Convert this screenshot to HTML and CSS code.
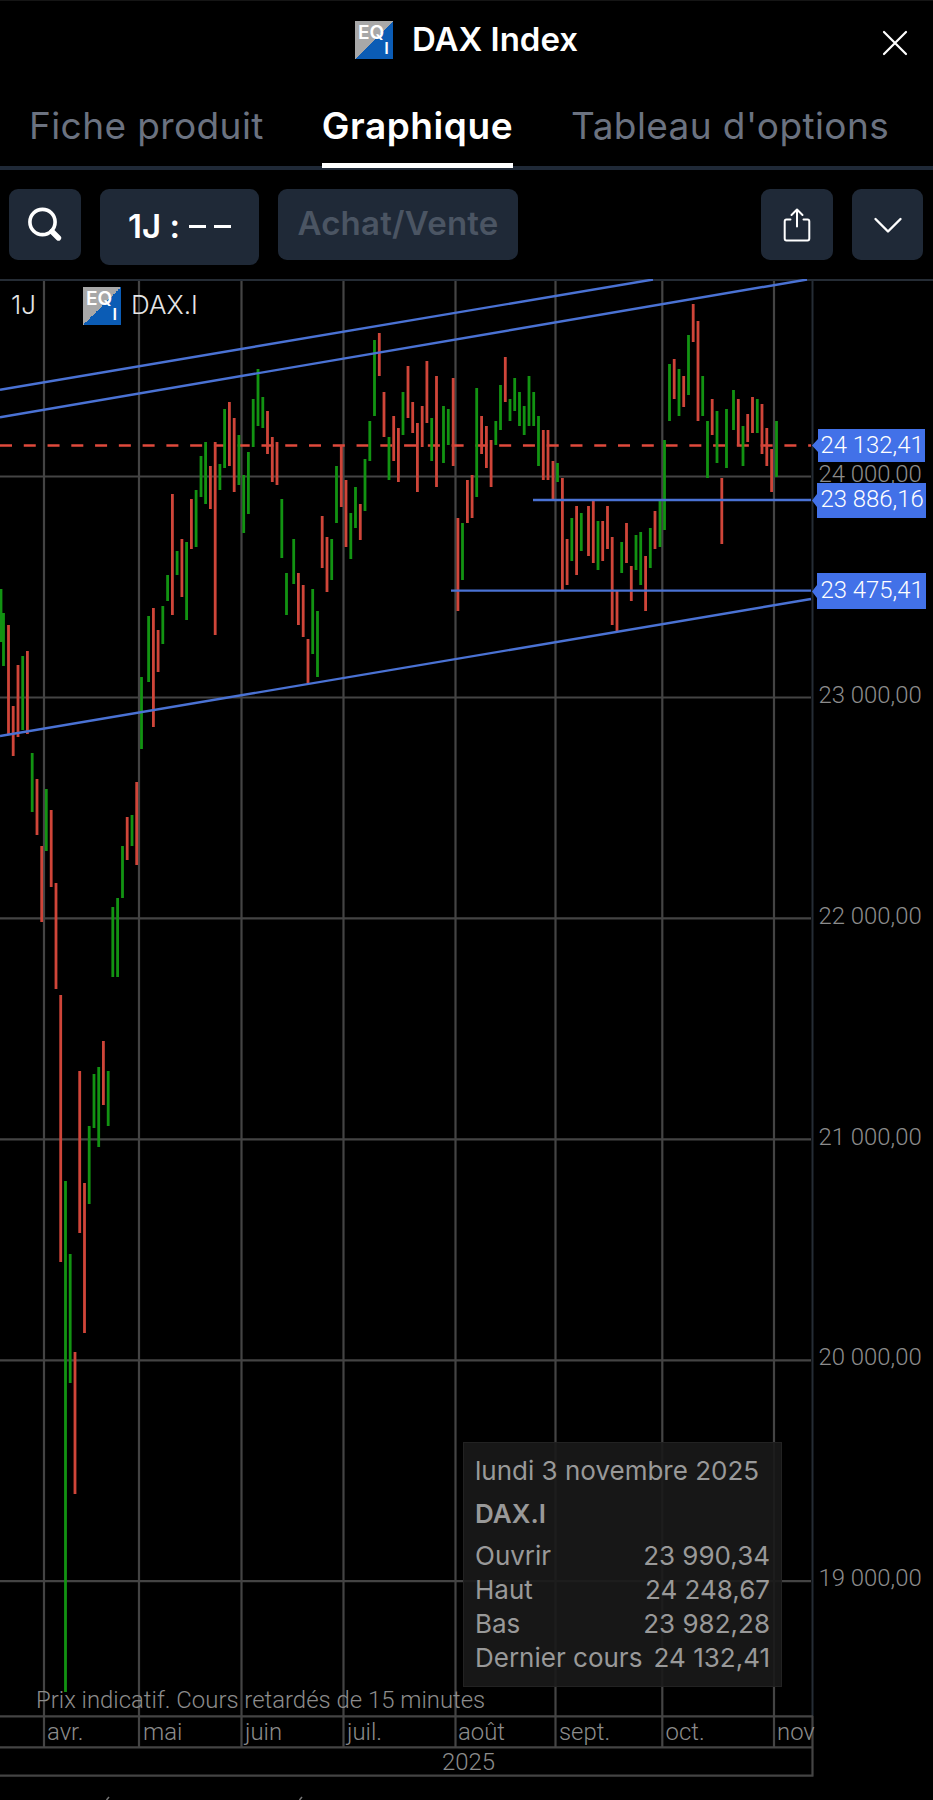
FILE: index.html
```
<!DOCTYPE html>
<html lang="fr">

<head>
    <meta charset="UTF-8" />
    <title>DAX Index</title>
    <link rel="stylesheet" href="styles.css">
</head>

<body>
    <header class="header">
        <div class="logo"><span class="eq">EQ</span><span class="i">I</span></div>
        <h1 class="title">DAX Index</h1>
        <svg class="close" width="26" height="26" viewBox="0 0 26 26">
            <path d="M2 2L24 24M24 2L2 24" />
        </svg>
    </header>

    <nav class="tabs">
        <a class="tab">Fiche produit</a>
        <a class="tab active">Graphique</a>
        <a class="tab">Tableau d'options</a>
    </nav>

    <div class="toolbar">
        <button class="btn icon">
            <svg width="36" height="36" viewBox="0 0 36 36">
                <circle cx="15.5" cy="15" r="12.6" fill="none" stroke="#fff" stroke-width="3.6" />
                <path d="M25 24.5L31.5 31" stroke="#fff" stroke-width="5.4" stroke-linecap="round" />
            </svg>
        </button>
        <button class="btn period"><span>1J</span><span class="colon">:</span><i></i><i></i></button>
        <button class="btn trade" disabled>Achat/Vente</button>
        <span class="spacer"></span>
        <button class="btn icon">
            <svg class="thin" width="28" height="36" viewBox="0 0 28 36">
                <path d="M7.500 12.500H3.500Q1.700 12.500 1.700 14.500V31.500Q1.700 33.500 3.500 33.500H24.500Q26.300 33.500 26.300 31.500V14.500Q26.300 12.500 24.500 12.500H20.500" />
                <path d="M14 19.500V3M8.500 8L14 2.500L19.500 8" />
            </svg>
        </button>
        <button class="btn icon last">
            <svg class="thin" width="30" height="18" viewBox="0 0 30 18">
                <path d="M2.500 3L15 15.500L27.500 3" stroke-width="2.4" />
            </svg>
        </button>
    </div>

    <main class="chart">
        <svg class="plot" width="933" height="1521" viewBox="0 279 933 1521">
            <!-- grid -->
            <path class="grid" d="M44 280V1747M139 280V1747M241.500 280V1747M343.500 280V1747M455.500 280V1747M555.500 280V1747M662.300 280V1747M774 280V1747" />
            <path class="grid" d="M0 476.500H811M0 697.500H811M0 918.300H811M0 1139.300H811M0 1360.300H811M0 1581.200H811" />
            <path class="frame" d="M0 280H933M812.500 280V1716" />
            <path class="grid" d="M0 1716.400H813M0 1747.400H813M0 1775.600H813.500M812.500 1716V1776" />

            <!-- last price -->
            <path class="last-price" d="M0 445.500H811" />

            <!-- daily ranges, up -->
            <path class="up" d="M1 589V642M3.500 613V666M22.700 656V730M32.200 753V812M46.300 789V851M65.500 1181V1692M70.200 1254V1383M89.200 1126V1204M94 1074V1128M98.700 1067V1147M108.200 1071V1126M112.800 907V977M117.600 898V977M122.500 846V898M132 815V846
                M141.500 677V749M148.600 616V682M162.800 606V644M167.600 575V601M177.100 551V575M186.600 542V620M196.100 490V547M201 456V497M205.600 442V504M219.900 464V490M224.600 409V468M238.900 435V485M243.700 475V533M248.400 452V514M253.200 399V447M258 369V426
                M262.800 397V428M281.800 499V558M286.500 573V615M293.700 539V584M312.700 589V654M317.500 611V677M331.700 539V580M336.500 466V523M350.800 513V559M355.500 487V528M365 459V511M369.800 421V461M374.500 340V416M389 437V480M403 392V435M431.700 418V461M443.500 406V463M448.300 409V445M462.500 523V580M476.700 388V497M495.800 421V445M500.500 385V430
                M510 399V421M514.700 378V411M519.500 392V426M524.200 406V435M529 376V426M533.700 392V426M538.500 416V466M557.500 463V482M571.800 518V561M581.300 513V551M598 521V570M621.700 542V573M636 535V570M640.700 532V585M650.300 528V568M660 500V547M664.500 440V530
                M669.500 364V421M679 369V416M688.500 335V395M702.700 376V416M707.500 421V478M717 411V463M726.500 409V468M733.500 390V430M743 426V466M757.300 399V433M776.500 421V477" />

            <!-- daily ranges, down -->
            <path class="down" d="M8.500 625V734M13.200 706V756M18 665V737M27.400 651V734M37 779V835M41.700 846V922M51.200 810V887M56 883V989M60.700 995V1262M75 1352V1494M79.700 1071V1233M84.500 1183V1333M103.400 1041V1105M127.200 817V860M136.700 782V865
                M153.400 608V727M158.100 630V672M172.400 494V615M181.900 539V597M191.400 499V549M210.400 466V509M215.200 442V635M229.400 402V466M234.200 418V492M267.500 411V454M272.300 437V482M277 442V485M298.400 573V625M303.200 585V637M308 639V683M322.200 516V568M327 537V592M341.300 445V507M346 480V547M360.300 504V540
                M379.300 333V376M384 392V437M393.700 416V461M398.400 428V482M408 366V418M412.700 402V433M417.400 423V492M422.200 406V447M426.900 361V423M436.500 376V487M453.200 378V466M457.900 518V611M467.400 480V523M472.100 475V518M481.600 416V454M486.400 426V468M491.100 440V487M505.300 357V402
                M543.300 430V480M548 430V480M553 461V501M562.400 478V590M567.100 539V585M576.600 506V575M588.500 506V556M593.300 501V563M602.700 521V561M607.500 506V549M612.200 537V625M617 591V632M626.500 523V563M631.300 566V601M645.600 556V611M655 511V549
                M674.200 359V399M683.700 376V407M693.200 304V342M698 321V421M712.200 399V435M721.800 478V544M738.300 399V446M747.700 414V442M752.500 397V433M762 404V454M766.800 428V466M771.600 449V492" />

            <!-- drawn trend lines -->
            <path class="trend" d="M0 389.700L653 279.500M0 417.200L807 279.500M0 736L811 599M533 500H811M451 590.600H811" />

            <!-- price scale -->
            <g class="scale">
                <text x="818.500" y="481.500">24 000,00</text>
                <text x="818.500" y="702.500">23 000,00</text>
                <text x="818.500" y="923.500">22 000,00</text>
                <text x="818.500" y="1144.500">21 000,00</text>
                <text x="818.500" y="1364.500">20 000,00</text>
                <text x="818.500" y="1585.500">19 000,00</text>
            </g>

            <g class="flags">
                <path d="M812 445.500L818 439V429H925V462H818V452Z" />
                <path d="M812 500.500L817 494V483H926V518H817V507Z" />
                <path d="M812 591.500L817 585V573H926V609H817V598Z" />
            </g>
            <g class="flag-text">
                <text x="820.500" y="452.500">24 132,41</text>
                <text x="820.500" y="507">23 886,16</text>
                <text x="820.500" y="597.500">23 475,41</text>
            </g>

            <!-- time scale -->
            <g class="scale">
                <text x="36" y="1708">Prix indicatif. Cours retardés de 15 minutes</text>
                <text x="47" y="1740">avr.</text>
                <text x="143" y="1740">mai</text>
                <text x="245" y="1740">juin</text>
                <text x="347" y="1740">juil.</text>
                <text x="458" y="1740">août</text>
                <text x="559" y="1740">sept.</text>
                <text x="665.500" y="1740">oct.</text>
                <text x="777" y="1740">nov</text>
                <text x="442" y="1770">2025</text>
            </g>

            <!-- top of the next line of text, below the fold -->
            <path class="accents" d="M106.500 1800L109 1797M299.500 1800L302 1797" />
        </svg>

        <div class="legend">
            <span>1J</span>
            <div class="logo"><span class="eq">EQ</span><span class="i">I</span></div>
            <span>DAX.I</span>
        </div>

        <div class="tooltip">
            <div class="date">lundi 3 novembre 2025</div>
            <div class="name">DAX.I</div>
            <div class="row"><span>Ouvrir</span><span>23 990,34</span></div>
            <div class="row"><span>Haut</span><span>24 248,67</span></div>
            <div class="row"><span>Bas</span><span>23 982,28</span></div>
            <div class="row"><span>Dernier cours</span><span>24 132,41</span></div>
        </div>
    </main>
</body>

</html>
```
FILE: styles.css
```
* {
    box-sizing: border-box;
}

body {
    margin: 0;
    width: 933px;
    height: 1800px;
    overflow: hidden;
    background-color: #000;
    color: #fff;
    font-family: Inter, "Liberation Sans", sans-serif;
}

svg {
    display: block;
}

.logo {
    position: relative;
    width: 38px;
    height: 38px;
    background: linear-gradient(135deg, #a8a8a8 50%, #0b5cb5 50%);
    color: #fff;
    font-weight: 600;
}

.logo .eq {
    position: absolute;
    left: 3px;
    top: 2px;
    font-size: 19px;
    line-height: 20px;
}

.logo .i {
    position: absolute;
    right: 4px;
    bottom: 1px;
    font-size: 16.5px;
    line-height: 20px;
}

.header {
    display: flex;
    align-items: center;
    justify-content: center;
    position: relative;
    height: 80px;
    border-top: 1px solid #151515;
}

.header .logo {
    top: -1px;
}

.title {
    margin: 0 0 4px 19px;
    font-size: 33px;
    font-weight: 600;
    line-height: 40px;
}

.close {
    position: absolute;
    right: 25px;
    top: 29px;
    fill: none;
    stroke: #fff;
    stroke-width: 2.2;
    stroke-linecap: round;
}

.tabs {
    display: flex;
    height: 90px;
    padding-left: 29px;
    gap: 58px;
    border-bottom: 4px solid #1f2937;
}

.tab {
    height: 88px;
    padding-top: 23px;
    font-size: 37px;
    line-height: 46px;
    letter-spacing: 0.4px;
    color: #6b7280;
    white-space: nowrap;
}

.tab.active {
    color: #fff;
    font-weight: 600;
    letter-spacing: 0.55px;
    border-bottom: 5px solid #fff;
}

.toolbar {
    display: flex;
    align-items: flex-start;
    gap: 19px;
    height: 109px;
    padding: 19px 10px 0 9px;
}

.btn {
    display: flex;
    align-items: center;
    justify-content: center;
    height: 71px;
    padding: 0;
    border: 0;
    border-radius: 9px;
    background-color: #1f2937;
    color: #fff;
    font: 600 33px Inter, sans-serif;
}

.btn.icon {
    width: 72px;
}

.btn.last {
    width: 71px;
}

.btn.period {
    width: 159px;
    height: 76px;
    gap: 8.5px;
}

.btn.period span {
    margin-bottom: 3px;
}

.btn.period i {
    width: 17px;
    height: 3px;
    margin-bottom: 2px;
    background-color: #fff;
}

.btn.trade {
    width: 240px;
    padding-bottom: 3px;
    letter-spacing: 0.2px;
    color: #4b5563;
}

.spacer {
    flex: 1;
}

.thin {
    fill: none;
    stroke: #fff;
    stroke-width: 2;
    stroke-linecap: round;
    stroke-linejoin: round;
}

.chart {
    position: relative;
    height: 1521px;
}

.grid {
    fill: none;
    stroke: #444;
    stroke-width: 2.2;
}

.frame {
    fill: none;
    stroke: #252c35;
    stroke-width: 2;
}

.last-price {
    stroke: #e04a3c;
    stroke-width: 2.4;
    stroke-dasharray: 12 11.77;
}

.up {
    stroke: #129312;
    stroke-width: 2.8;
}

.down {
    stroke: #cf4539;
    stroke-width: 2.8;
}

.trend {
    fill: none;
    stroke: #4a72d4;
    stroke-width: 2.4;
}

.scale text,
.flag-text text {
    font: 300 23.900px Roboto, sans-serif;
    fill: #8c8c8c;
}

.flags {
    fill: #4271e8;
}

.flag-text text {
    fill: #fff;
}

.accents {
    stroke: #777;
    stroke-width: 1.5;
}

.legend {
    display: flex;
    align-items: center;
    position: absolute;
    left: 11px;
    top: 8px;
    font-size: 26px;
    font-weight: 300;
    color: #e5e5e5;
}

.legend > span {
    margin-bottom: 4px;
}

.legend .logo {
    margin: 0 10px 0 47px;
}

.tooltip {
    position: absolute;
    left: 463px;
    top: 1163px;
    width: 319px;
    height: 245px;
    padding: 11px 11px;
    background-color: rgba(26, 26, 26, 0.9);
    border: 1px solid #222;
    color: #999;
    font-size: 26px;
    line-height: 34px;
}

.tooltip .name {
    margin: 9px 0 8px;
    font-weight: 600;
}

.tooltip .row {
    display: flex;
    justify-content: space-between;
    white-space: nowrap;
}
```
